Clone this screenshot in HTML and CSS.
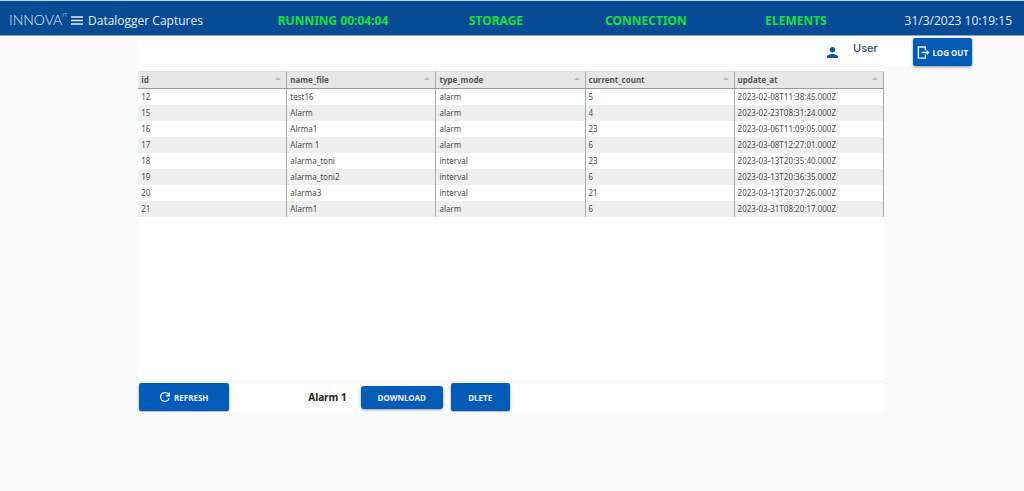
FILE: index.html
```html
<!DOCTYPE html>
<html lang="en">
<head>
<meta charset="utf-8">
<title>Datalogger Captures</title>
<link rel="stylesheet" href="styles.css">
</head>
<body>
<header class="topbar">
  <div class="brand">
    <span class="logo">INNOVA<sup class="logo-sup">IT</sup></span>
    <button class="menu" type="button" aria-label="Menu">
      <svg viewBox="0 0 12 9" width="12" height="9"><path d="M0 1h12M0 4.5h12M0 8h12" stroke="currentColor" stroke-width="1.3"/></svg>
    </button>
    <h1 class="title">Datalogger Captures</h1>
  </div>
  <span class="status">RUNNING 00:04:04</span>
  <span class="status">STORAGE</span>
  <span class="status">CONNECTION</span>
  <span class="status">ELEMENTS</span>
  <time class="clock">31/3/2023 10:19:15</time>
</header>
<div class="userbar">
  <div class="user">
    <svg class="user-icon" viewBox="4 4 16 16" width="11" height="11"><path fill="currentColor" d="M12 12c2.21 0 4-1.79 4-4s-1.79-4-4-4-4 1.79-4 4 1.79 4 4 4zm0 2c-2.67 0-8 1.34-8 4v2h16v-2c0-2.66-5.33-4-8-4z"/></svg>
    <span class="user-name">User</span>
  </div>
  <button class="btn logout" type="button">
    <svg viewBox="0 0 14 14" width="13" height="13" fill="none" stroke="currentColor" stroke-width="1.5"><path d="M9 4.500V1H1.500v12H9V9.500M5 7h7"/><path d="M10.500 4 13.500 7 10.500 10z" fill="currentColor" stroke="none"/></svg>
    LOG OUT
  </button>
</div>
<main class="panel">
  <div class="grid">
    <table class="captures">
      <thead>
        <tr><th>id</th><th>name_file</th><th>type_mode</th><th>current_count</th><th>update_at</th></tr>
      </thead>
      <tbody>
        <tr><td>12</td><td>test16</td><td>alarm</td><td>5</td><td>2023-02-08T11:38:45.000Z</td></tr>
        <tr><td>15</td><td>Alarm</td><td>alarm</td><td>4</td><td>2023-02-23T08:31:24.000Z</td></tr>
        <tr><td>16</td><td>Alrma1</td><td>alarm</td><td>23</td><td>2023-03-06T11:09:05.000Z</td></tr>
        <tr><td>17</td><td>Alarm 1</td><td>alarm</td><td>6</td><td>2023-03-08T12:27:01.000Z</td></tr>
        <tr><td>18</td><td>alarma_toni</td><td>interval</td><td>23</td><td>2023-03-13T20:35:40.000Z</td></tr>
        <tr><td>19</td><td>alarma_toni2</td><td>interval</td><td>6</td><td>2023-03-13T20:36:35.000Z</td></tr>
        <tr><td>20</td><td>alarma3</td><td>interval</td><td>21</td><td>2023-03-13T20:37:26.000Z</td></tr>
        <tr><td>21</td><td>Alarm1</td><td>alarm</td><td>6</td><td>2023-03-31T08:20:17.000Z</td></tr>
      </tbody>
    </table>
  </div>
  <div class="actions">
    <button class="btn refresh" type="button">
      <svg viewBox="4 4 16 16" width="10" height="10"><path fill="currentColor" d="M17.650 6.350C16.200 4.900 14.210 4 12 4c-4.420 0-7.990 3.580-7.990 8s3.570 8 7.990 8c3.730 0 6.840-2.550 7.730-6h-2.080c-.82 2.330-3.040 4-5.650 4-3.310 0-6-2.690-6-6s2.690-6 6-6c1.660 0 3.140.69 4.220 1.780L13 11h7V4l-2.350 2.350z"/></svg>
      REFRESH
    </button>
    <strong class="selected">Alarm 1</strong>
    <button class="btn download" type="button">DOWNLOAD</button>
    <button class="btn delete" type="button">DLETE</button>
  </div>
</main>
</body>
</html>
```
FILE: styles.css
```css
* { box-sizing: border-box; }

body {
  margin: 0;
  background: #fafafa;
  color: #4a4a4a;
  font-family: "Noto Sans", "Open Sans", sans-serif;
  font-size: 8px;
}

.topbar {
  display: grid;
  grid-template-columns: 245fr 176fr 150fr 150fr 150fr 153fr;
  align-items: center;
  height: 36px;
  padding-top: 4px;
  border-top: 1px solid #b5d3ea;
  border-bottom: 1px solid #7fa3cb;
  background: #064b93;
  color: #e4eefa;
  font-size: 12px;
  white-space: nowrap;
}

.brand {
  display: flex;
  align-items: center;
  padding-left: 9px;
}

.logo {
  width: 62px;
  font-family: Lato, sans-serif;
  font-size: 14px;
  font-weight: 300;
  line-height: 16px;
}

.logo-sup {
  font-size: 6px;
  line-height: 6px;
  vertical-align: top;
}

.menu {
  display: flex;
  margin: 0 5px 0 0;
  padding: 0;
  border: 0;
  background: none;
  color: inherit;
}

.title {
  margin: 0;
  font-family: "Open Sans", sans-serif;
  font-size: 12px;
  font-weight: 400;
}

.status {
  color: #12e33a;
  font-weight: 700;
  text-align: center;
}

.clock {
  padding-right: 12px;
  font-family: "Open Sans", sans-serif;
  text-align: right;
}

.userbar {
  display: flex;
  margin-left: 13.5%;
  margin-right: 5.1%;
}

.user {
  display: flex;
  flex: 1;
  justify-content: flex-end;
  gap: 15px;
  padding: 4px 35px 0 0;
  background: #fff;
  color: #0b57a8;
}

.user-icon { margin-top: 7px; }

.user-name {
  color: #2c4f86;
  font-family: Inter, sans-serif;
  font-size: 11px;
  font-weight: 500;
  line-height: 16px;
}

.btn {
  display: flex;
  align-items: center;
  justify-content: center;
  gap: 3px;
  height: 28px;
  padding: 0;
  border: 0;
  border-radius: 2px;
  background: #055cb8;
  box-shadow: 0 1px 3px #0006;
  color: #e8f2fd;
  font-family: inherit;
  font-size: 8px;
  font-weight: 700;
  white-space: nowrap;
}

.logout {
  width: 59px;
  margin-top: 2px;
}

.panel {
  margin: 0 13.7% 0 13.5%;
  background: #fff;
}

.grid {
  min-height: 316px;
  padding-top: 5px;
  border-bottom: 1px solid #f3f3f3;
}

.captures {
  width: 100%;
  border-collapse: separate;
  border-spacing: 0;
  table-layout: fixed;
}

.captures th,
.captures td {
  height: 16px;
  padding: 0 3px;
  border-right: 1px solid #aaa;
  line-height: 16px;
  text-align: left;
}

.captures th {
  height: 18px;
  border-top: 1px solid #ddd;
  border-bottom: 1px solid #999;
  background: #e6e6e6;
  color: #555;
}

.captures th::after {
  content: "";
  float: right;
  margin: 5px 2px 0 0;
  border: 3px solid transparent;
  border-top: 0;
  border-bottom: 3px solid #bbb;
}

.captures tbody tr:nth-child(even) { background: #efefef; }

.actions {
  display: flex;
  align-items: center;
  padding: 1px 0 1px 1px;
}

.refresh {
  gap: 4px;
  width: 90px;
}

.selected {
  margin: 0 14px 0 79px;
  color: #222;
  font-size: 10px;
}

.download {
  width: 82px;
  height: 23px;
  margin-right: 8px;
  border-radius: 3px;
}

.delete { width: 59px; }
```
